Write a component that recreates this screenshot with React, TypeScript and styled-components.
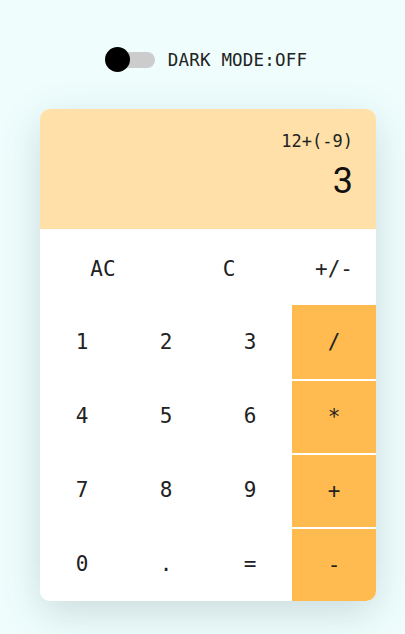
import styled, { createGlobalStyle } from "styled-components";

const GlobalStyle = createGlobalStyle`
    html, body {
        margin: 0;
        padding: 0;
        background: #effdfd;
    }
    * {
        box-sizing: border-box;
    }
`;

const digitRows = [
    ["1", "2", "3", "/"],
    ["4", "5", "6", "*"],
    ["7", "8", "9", "+"],
    ["0", ".", "=", "-"],
];

function App() {
    return (
        <Page>
            <GlobalStyle />
            <ModeRow>
                <Track>
                    <Knob />
                </Track>
                <ModeLabel>DARK MODE:OFF</ModeLabel>
            </ModeRow>
            <Calculator>
                <Display>
                    <Expression>12+(-9)</Expression>
                    <Result>3</Result>
                </Display>
                <TopRow>
                    <Key>AC</Key>
                    <Key>C</Key>
                    <Key>+/-</Key>
                </TopRow>
                <Keypad>
                    {digitRows.map((row, r) =>
                        row.map((label, c) =>
                            c === 3 ? (
                                <OpKey key={label} $first={r === 0}>
                                    {label}
                                </OpKey>
                            ) : (
                                <Key key={label}>{label}</Key>
                            )
                        )
                    )}
                </Keypad>
            </Calculator>
        </Page>
    );
}

export default App;

const Page = styled.div`
    min-height: 634px;
    display: flex;
    flex-direction: column;
    align-items: center;
    padding: 47px 0 0 11px;
    background: #effdfd;
`;

const ModeRow = styled.div`
    display: flex;
    align-items: center;
    height: 25px;
    gap: 13px;
    margin-left: -4px;
`;

const Track = styled.div`
    position: relative;
    width: 38px;
    height: 16px;
    margin-left: 12px;
    border-radius: 8px;
    background: #cccccc;
`;

const Knob = styled.div`
    position: absolute;
    left: -12px;
    top: 50%;
    width: 25px;
    height: 25px;
    margin-top: -12.5px;
    border-radius: 50%;
    background: #000000;
`;

const ModeLabel = styled.span`
    font-family: "DejaVu Sans Mono", "Liberation Mono", monospace;
    font-size: 17.5px;
    color: #222222;
    letter-spacing: 0.2px;
`;

const Calculator = styled.div`
    margin-top: 37px;
    width: 336px;
    border-radius: 10px;
    overflow: hidden;
    background: #ffffff;
    box-shadow: 0 12px 40px rgba(60, 90, 90, 0.2);
`;

const Display = styled.div`
    height: 120px;
    display: flex;
    flex-direction: column;
    align-items: flex-end;
    padding: 20px 23px 0 0;
    background: #ffe0a8;
    gap: 8px;
`;

const Expression = styled.div`
    font-family: "DejaVu Sans Mono", "Liberation Mono", monospace;
    font-size: 17px;
    line-height: 24px;
    color: #222222;
`;

const Result = styled.div`
    font-family: Roboto, "Liberation Sans", sans-serif;
    font-size: 36px;
    line-height: 40px;
    color: #111111;
`;

const TopRow = styled.div`
    display: grid;
    grid-template-columns: 126px 126px 84px;
    height: 76px;
    padding-top: 3px;
`;

const Keypad = styled.div`
    display: grid;
    grid-template-columns: repeat(4, 84px);
    grid-auto-rows: 74px;
`;

const Key = styled.button`
    display: flex;
    align-items: center;
    justify-content: center;
    border: none;
    padding: 0;
    background: #ffffff;
    font-family: "DejaVu Sans Mono", "Liberation Mono", monospace;
    font-size: 21px;
    color: #222222;
    cursor: pointer;
`;

const OpKey = styled(Key)<{ $first?: boolean }>`
    background: #ffbb4f;
    border-top: ${(p) => (p.$first ? "none" : "2px solid #ffffff")};
`;
